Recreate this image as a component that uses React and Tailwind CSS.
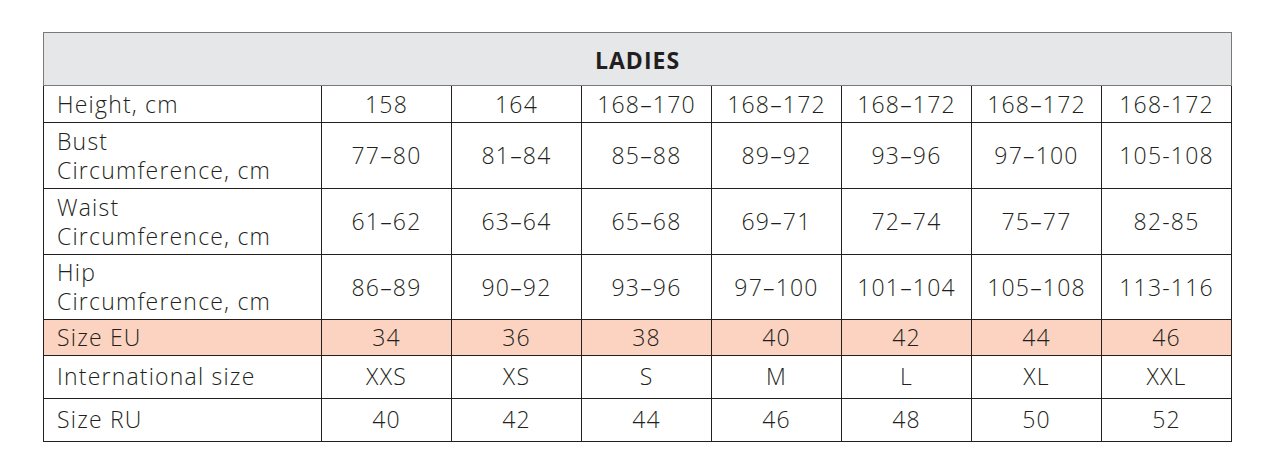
import React from "react";

const sizes = [
  { label: ["Height, cm"], h: "h-[37px]", vals: ["158", "164", "168–170", "168–172", "168–172", "168–172", "168-172"] },
  { label: ["Bust", "Circumference, cm"], h: "h-[66px]", vals: ["77–80", "81–84", "85–88", "89–92", "93–96", "97–100", "105-108"] },
  { label: ["Waist", "Circumference, cm"], h: "h-[66px]", vals: ["61–62", "63–64", "65–68", "69–71", "72–74", "75–77", "82-85"] },
  { label: ["Hip", "Circumference, cm"], h: "h-[65px]", vals: ["86–89", "90–92", "93–96", "97–100", "101–104", "105–108", "113-116"] },
  { label: ["Size EU"], h: "h-[35px]", eu: true, vals: ["34", "36", "38", "40", "42", "44", "46"] },
  { label: ["International size"], h: "h-[43px]", vals: ["XXS", "XS", "S", "M", "L", "XL", "XXL"] },
  { label: ["Size RU"], h: "h-[43px]", vals: ["40", "42", "44", "46", "48", "50", "52"] },
];

const App = () => {
  return (
    <div className="bg-white min-h-[472px] pt-[32px] pl-[43px] font-['Open_Sans',sans-serif] text-[#231f20]">
      <table className="table-fixed border-collapse w-[1188px] border-[1.5px] border-[#7a7a7a]">
        <colgroup>
          <col className="w-[278px]" />
          {[0, 1, 2, 3, 4, 5, 6].map((i) => (
            <col key={i} className="w-[130px]" />
          ))}
        </colgroup>
        <thead>
          <tr className="h-[53px] bg-[#e6e7e8]">
            <th colSpan={8} className="border-b border-[#7a7a7a] text-[23px] font-bold tracking-[1px] pt-[2px]">
              LADIES
            </th>
          </tr>
        </thead>
        <tbody>
          {sizes.map((row, r) => (
            <tr key={r} className={`${row.h} ${row.eu ? "bg-[#fbd3c0]" : ""}`}>
              <td className={`border border-[#231f20] pl-[13px] text-[23px] font-light tracking-[1.2px] leading-[29px] ${row.eu ? "border-t-[#7a7a7a]" : ""}`}>
                {row.label.map((l, i) => (
                  <div key={i}>{l}</div>
                ))}
              </td>
              {row.vals.map((v, i) => (
                <td
                  key={i}
                  className={`border border-[#231f20] text-center text-[23px] font-light tracking-[1.2px] ${row.eu ? "border-t-[#7a7a7a]" : ""} ${i === 6 ? "border-l-[#7a7a7a]" : ""}`}
                >
                  {v}
                </td>
              ))}
            </tr>
          ))}
        </tbody>
      </table>
    </div>
  );
};

export default App;
